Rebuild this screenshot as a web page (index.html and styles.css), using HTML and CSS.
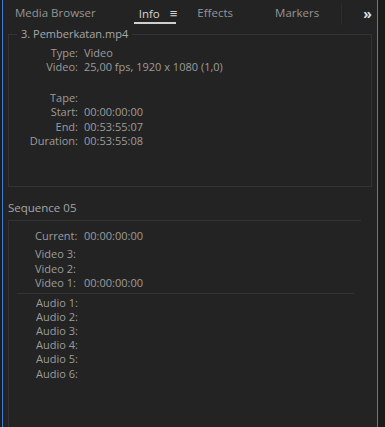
FILE: index.html
```html
<!DOCTYPE html>
<html lang="en">
<head>
    <meta charset="UTF-8">
    <title>Info</title>
    <link rel="stylesheet" href="styles.css">
</head>
<body>
    <div class="panel">
        <div class="tabs">
            <span class="tab tab-media">Media Browser</span>
            <span class="tab tab-info active">Info <span class="menu">&#8801;</span></span>
            <span class="tab tab-effects">Effects</span>
            <span class="tab tab-markers">Markers</span>
            <span class="tab-sep"></span>
            <span class="more">&raquo;</span>
        </div>

        <fieldset class="clip-box">
            <legend>3. Pemberkatan.mp4</legend>
            <div class="rows">
                <span class="lbl">Type:</span><span class="val">Video</span>
                <span class="lbl">Video:</span><span class="val">25,00 fps, 1920 x 1080 (1,0)</span>
            </div>
            <div class="rows rows-gap">
                <span class="lbl">Tape:</span><span class="val"></span>
                <span class="lbl">Start:</span><span class="val">00:00:00:00</span>
                <span class="lbl">End:</span><span class="val">00:53:55:07</span>
                <span class="lbl">Duration:</span><span class="val">00:53:55:08</span>
            </div>
        </fieldset>

        <div class="seq-title">Sequence 05</div>
        <div class="seq-box">
            <div class="seq-rows">
                <span class="lbl">Current:</span><span class="val">00:00:00:00</span>
            </div>
            <div class="seq-rows tracks">
                <span class="lbl">Video 3:</span><span class="val"></span>
                <span class="lbl">Video 2:</span><span class="val"></span>
                <span class="lbl">Video 1:</span><span class="val">00:00:00:00</span>
            </div>
            <div class="divider"></div>
            <div class="seq-rows audio">
                <span class="lbl">Audio 1:</span><span class="val"></span>
                <span class="lbl">Audio 2:</span><span class="val"></span>
                <span class="lbl">Audio 3:</span><span class="val"></span>
                <span class="lbl">Audio 4:</span><span class="val"></span>
                <span class="lbl">Audio 5:</span><span class="val"></span>
                <span class="lbl">Audio 6:</span><span class="val"></span>
            </div>
        </div>
    </div>
</body>
</html>
```

FILE: styles.css
```css
html, body {
    height: 100%;
}

body {
    margin: 0;
    background-color: #1a1a1a;
    font-family: "Open Sans", "Noto Sans", sans-serif;
    font-size: 11px;
    color: #9c9c9c;
    overflow: hidden;
}

.panel {
    display: flex;
    flex-direction: column;
    margin-left: 2px;
    width: 374px;
    height: 100%;
    background-color: #232323;
    border-left: 1px solid #3f7fd0;
    border-right: 1px solid #3f7fd0;
}

.tabs {
    position: relative;
    display: flex;
    align-items: center;
    height: 27px;
    flex-shrink: 0;
}

.tab {
    white-space: nowrap;
    color: #959595;
    font-size: 11.5px;
    line-height: 20px;
    margin-bottom: 1px;
}

.tab-media { margin-left: 12px; }
.tab-info { margin-left: 43px; }
.tab-effects { margin-left: 20px; }
.tab-markers { margin-left: 42px; }

.tab.active {
    color: #d4d4d4;
}

.tab-info::after {
    content: "";
    position: absolute;
    left: 131px;
    top: 22px;
    width: 42px;
    height: 2px;
    background-color: #cfcfcf;
}

.menu {
    margin-left: 7px;
    font-size: 13px;
}

.tab-sep {
    width: 1px;
    height: 22px;
    margin-left: 22px;
    background-color: #2c2c2c;
}

.more {
    margin-left: 21px;
    color: #dcdcdc;
    font-weight: bold;
    font-size: 14px;
    letter-spacing: -2px;
}

.clip-box {
    flex-shrink: 0;
    margin: 0 0 0 5px;
    width: 364px;
    height: 160px;
    box-sizing: border-box;
    padding: 5px 0 0 0;
    border: 1px solid #333333;
}

.clip-box legend {
    margin-left: 8px;
    padding: 0 4px;
    color: #a8a8a8;
    font-size: 11px;
    line-height: 14px;
}

.rows {
    display: grid;
    grid-template-columns: 69px 1fr;
    column-gap: 6px;
    line-height: 14.4px;
}

.rows-gap {
    margin-top: 16px;
}

.lbl {
    text-align: right;
    white-space: nowrap;
}

.val {
    white-space: nowrap;
}

.seq-title {
    margin: 13px 0 0 5px;
    color: #a6a6a6;
    font-size: 11.5px;
    line-height: 16px;
}

.seq-box {
    flex: 1;
    min-height: 0;
    margin: 4px 0 0 5px;
    width: 352px;
    border-top: 1px solid #333333;
    border-left: 1px solid #333333;
    padding-top: 8px;
}

.seq-rows {
    display: grid;
    grid-template-columns: 44px 1fr;
    column-gap: 5px;
    line-height: 14.4px;
    padding-left: 26px;
}

.seq-rows .lbl {
    text-align: left;
}

.tracks {
    margin-top: 4px;
}

.divider {
    margin: 2px 7px 2px 8px;
    height: 1px;
    background-color: #333333;
}

.audio {
    padding-left: 27px;
    line-height: 14.2px;
}
```
